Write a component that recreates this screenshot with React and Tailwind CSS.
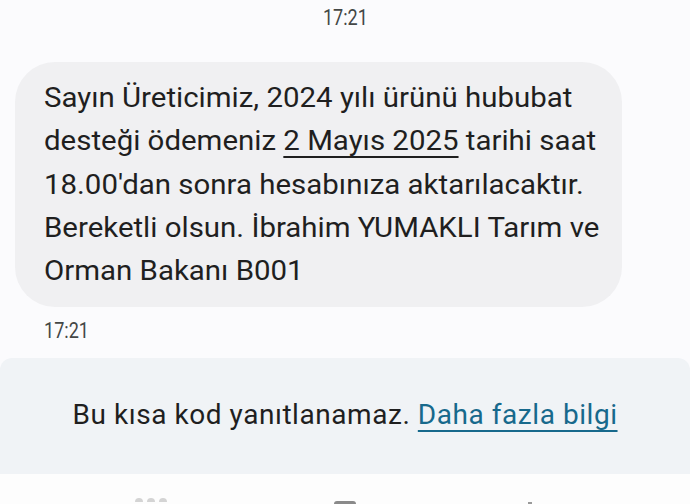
const LINES = [
  <>Sayın Üreticimiz, 2024 yılı ürünü hububat</>,
  <>
    desteği ödemeniz{" "}
    <span className="underline decoration-[2px] underline-offset-[6px]">2 Mayıs 2025</span> tarihi saat
  </>,
  <>18.00'dan sonra hesabınıza aktarılacaktır.</>,
  <>Bereketli olsun. İbrahim YUMAKLI Tarım ve</>,
  <>Orman Bakanı B001</>,
];

export default function App() {
  return (
    <div className="w-[690px] h-[504px] overflow-hidden bg-[#fbfbfd] text-[#1f1f1f] font-['Roboto',sans-serif] flex flex-col">
      <div className="pt-[4px] h-[32px] flex justify-center">
        <span className="inline-block text-[22px] leading-[28px] text-[#444746] scale-x-[0.82] origin-center">17:21</span>
      </div>

      <div className="mt-[30px] ml-[15px] w-[607px] h-[245px] rounded-[40px] bg-[#f0f0f2] pl-[29px] pt-[15px]">
        <div className="scale-x-[1.09] origin-left whitespace-nowrap text-[27px] leading-[43.3px]">
          {LINES.map((l, i) => (
            <div key={i}>{l}</div>
          ))}
        </div>
      </div>

      <div className="ml-[44px] mt-[10px] h-[30px]">
        <span className="inline-block text-[22px] leading-[28px] text-[#444746] scale-x-[0.82] origin-left">17:21</span>
      </div>

      <div className="mt-[11px] h-[116px] rounded-tl-[12px] rounded-tr-[12px] bg-[#f0f3f6] flex items-center justify-center">
        <p className="text-[28px] leading-[36px] tracking-[0.55px] pb-[3px]">
          Bu kısa kod yanıtlanamaz.{" "}
          <span className="text-[#17698c] underline decoration-[2px] underline-offset-[6px]">Daha fazla bilgi</span>
        </p>
      </div>

      <div className="flex-1 bg-[#fdfdfd] flex items-end pl-[135px] gap-[167px]">
        <div className="flex gap-[4px] mb-[2px]">
          <span className="w-[8px] h-[4px] rounded-t-full bg-[#d4d4d4]" />
          <span className="w-[8px] h-[4px] rounded-t-full bg-[#d4d4d4]" />
          <span className="w-[8px] h-[4px] rounded-t-full bg-[#d4d4d4]" />
        </div>
        <span className="w-[22px] h-[3px] rounded-t-full bg-[#8a8a8a]" />
        <span className="ml-[5px] w-[4px] h-[2px] bg-[#9a9a9a]" />
      </div>
    </div>
  );
}
